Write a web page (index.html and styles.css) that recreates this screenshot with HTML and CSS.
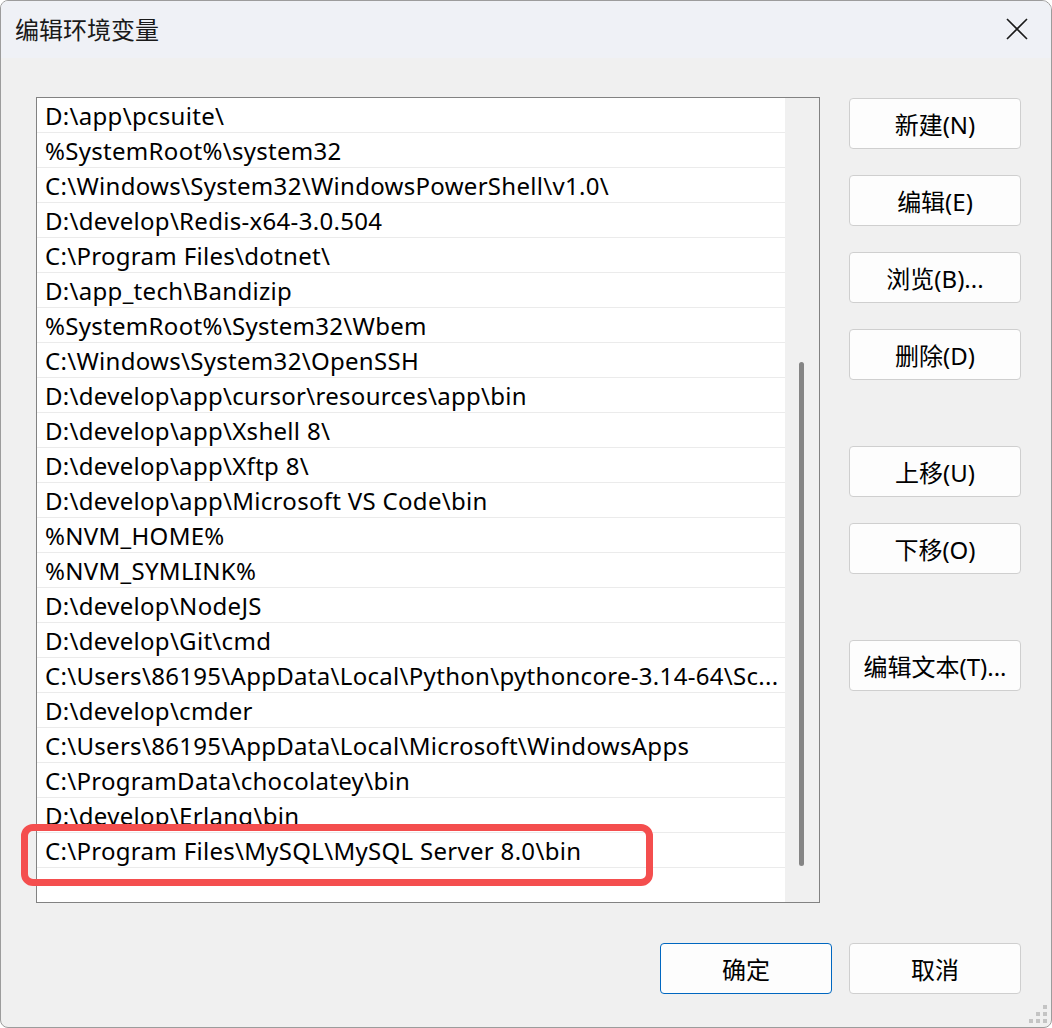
FILE: index.html
```html
<!DOCTYPE html>
<html lang="zh-CN">
<head>
    <meta charset="UTF-8">
    <meta name="viewport" content="width=device-width, initial-scale=1.0">
    <title>编辑环境变量</title>
    <link rel="stylesheet" href="styles.css">
</head>
<body>
    <div class="janela">
        <div class="titulo">
            <span class="titulo-texto">编辑环境变量</span>
            <svg class="fechar" width="22" height="22" viewBox="0 0 22 22">
                <path d="M1 1 L21 21 M21 1 L1 21" stroke="#1a1a1a" stroke-width="1.6" fill="none"/>
            </svg>
        </div>

        <div class="corpo">
            <div class="principal">
                <div class="lista">
                    <div class="linhas">
                        <div class="linha">D:\app\pcsuite\</div>
                        <div class="linha">%SystemRoot%\system32</div>
                        <div class="linha">C:\Windows\System32\WindowsPowerShell\v1.0\</div>
                        <div class="linha">D:\develop\Redis-x64-3.0.504</div>
                        <div class="linha">C:\Program Files\dotnet\</div>
                        <div class="linha">D:\app_tech\Bandizip</div>
                        <div class="linha">%SystemRoot%\System32\Wbem</div>
                        <div class="linha">C:\Windows\System32\OpenSSH</div>
                        <div class="linha">D:\develop\app\cursor\resources\app\bin</div>
                        <div class="linha">D:\develop\app\Xshell 8\</div>
                        <div class="linha">D:\develop\app\Xftp 8\</div>
                        <div class="linha">D:\develop\app\Microsoft VS Code\bin</div>
                        <div class="linha">%NVM_HOME%</div>
                        <div class="linha">%NVM_SYMLINK%</div>
                        <div class="linha">D:\develop\NodeJS</div>
                        <div class="linha">D:\develop\Git\cmd</div>
                        <div class="linha">C:\Users\86195\AppData\Local\Python\pythoncore-3.14-64\Sc...</div>
                        <div class="linha">D:\develop\cmder</div>
                        <div class="linha">C:\Users\86195\AppData\Local\Microsoft\WindowsApps</div>
                        <div class="linha">C:\ProgramData\chocolatey\bin</div>
                        <div class="linha">D:\develop\Erlang\bin</div>
                        <div class="linha">C:\Program Files\MySQL\MySQL Server 8.0\bin</div>
                    </div>
                    <div class="rolagem">
                        <div class="polegar"></div>
                    </div>
                </div>

                <div class="botoes">
                    <button class="botao">新建(N)</button>
                    <button class="botao">编辑(E)</button>
                    <button class="botao">浏览(B)...</button>
                    <button class="botao">删除(D)</button>
                    <button class="botao grupo">上移(U)</button>
                    <button class="botao">下移(O)</button>
                    <button class="botao grupo">编辑文本(T)...</button>
                </div>
            </div>

            <div class="rodape">
                <button class="botao padrao">确定</button>
                <button class="botao">取消</button>
            </div>
        </div>

        <!-- destaque vermelho sobre a ultima linha -->
        <div class="marcacao"></div>

        <div class="alca">
            <span></span><span></span><span></span><span></span><span></span><span></span>
        </div>
    </div>
</body>
</html>
```

FILE: styles.css
```css
* {
    box-sizing: border-box;
}

body {
    margin: 0;
    background-color: #ffffff;
    font-family: 'Noto Sans', 'Noto Sans CJK SC', sans-serif;
    color: #000;
}

.janela {
    position: relative;
    width: 1052px;
    height: 1028px;
    border: 1px solid #9c9c9c;
    border-radius: 8px 10px 8px 8px;
    background-color: #f0f0f0;
    overflow: hidden;
}

.titulo {
    height: 57px;
    background-color: #eff1f6;
    display: flex;
    align-items: center;
    justify-content: space-between;
    padding: 0 23px 0 14px;
}

.titulo-texto {
    font-size: 24px;
    font-family: 'Noto Sans CJK SC', sans-serif;
    color: #1a1a1a;
    margin-top: -3px;
}

.fechar {
    margin-top: -2px;
}

.corpo {
    padding: 39px 30px 0 35px;
}

.principal {
    display: flex;
    gap: 29px;
}

.lista {
    width: 784px;
    height: 806px;
    border: 1px solid #828282;
    background-color: #fff;
    display: flex;
}

.linhas {
    width: 748px;
}

.linha {
    height: 35px;
    border-bottom: 1px solid #ebebeb;
    padding: 1px 0 0 8px;
    font-size: 24px;
    letter-spacing: 0.3px;
    line-height: 33px;
    white-space: nowrap;
    overflow: hidden;
}

.rolagem {
    flex: 1;
    background-color: #f0f0f0;
    padding: 264px 0 0 14px;
}

.polegar {
    width: 5px;
    height: 504px;
    border-radius: 3px;
    background-color: #858585;
}

.botoes {
    display: flex;
    flex-direction: column;
    gap: 26px;
    padding-top: 1px;
}

.botao {
    width: 172px;
    height: 51px;
    background-color: #fdfdfd;
    border: 1px solid #cfcfcf;
    border-radius: 4px;
    font-family: 'Noto Sans', 'Noto Sans CJK SC', sans-serif;
    font-size: 24px;
    color: #000;
    padding: 0;
}

.botao.grupo {
    margin-top: 40px;
}

.botao.padrao {
    border-color: #0067c0;
}

.rodape {
    display: flex;
    justify-content: flex-end;
    gap: 17px;
    padding-top: 40px;
}

.marcacao {
    position: absolute;
    left: 20px;
    top: 823px;
    width: 632px;
    height: 62px;
    border: 7px solid #f44e4e;
    border-radius: 12px;
}

.alca {
    position: absolute;
    right: 4px;
    bottom: 4px;
    width: 18px;
    height: 18px;
    display: grid;
    grid-template-columns: repeat(3, 4px);
    grid-template-rows: repeat(3, 4px);
    gap: 3px;
}

.alca span {
    background-color: #c4c4c4;
}

.alca span:nth-child(1) { grid-area: 1 / 3; }
.alca span:nth-child(2) { grid-area: 2 / 2; }
.alca span:nth-child(3) { grid-area: 2 / 3; }
.alca span:nth-child(4) { grid-area: 3 / 1; }
.alca span:nth-child(5) { grid-area: 3 / 2; }
.alca span:nth-child(6) { grid-area: 3 / 3; }
```
